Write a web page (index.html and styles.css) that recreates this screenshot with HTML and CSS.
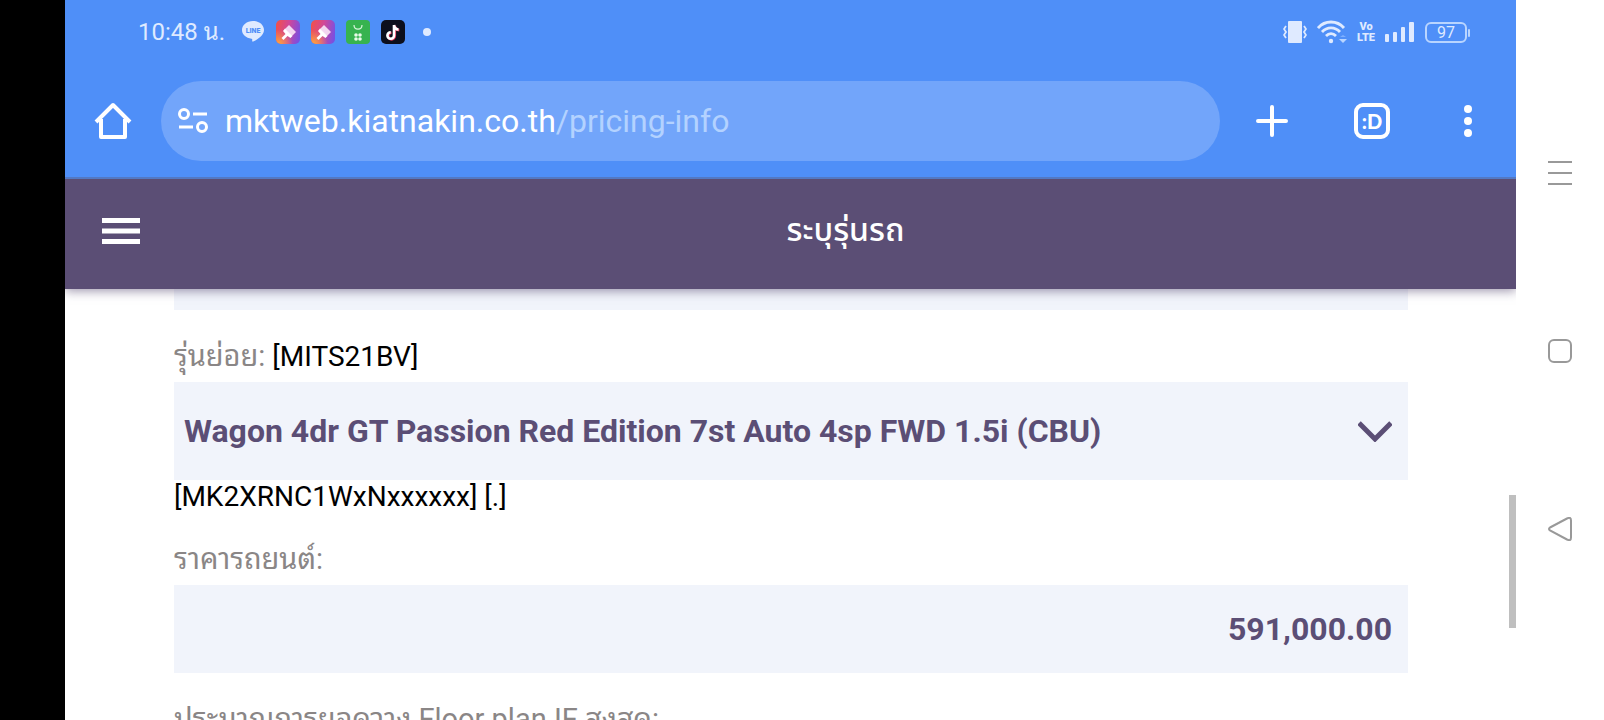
FILE: index.html
```html
<!DOCTYPE html>
<html lang="th">
<head>
  <meta charset="UTF-8">
  <meta name="viewport" content="width=device-width, initial-scale=1.0">
  <title>ระบุรุ่นรถ</title>
  <link rel="stylesheet" href="styles.css">
</head>
<body>

  <div class="screen">
    <header class="browser">
      <div class="statusBar">
        <span class="clock">10:48 น.</span>
        <div class="notifications">
          <svg width="24" height="24" viewBox="0 0 24 24">
            <path d="M12 1C5.700 1 1 5 1 10c0 4.500 4 8 9.500 8.800.9.200.8.700.7 1.500-.2 1.300.2 1.800 1.600 1C16 19.500 23 15.500 23 10c0-5-4.700-9-11-9z" fill="#dfeaff"/>
            <text x="12" y="13" class="lineText">LINE</text>
          </svg>
          <svg width="24" height="24" viewBox="0 0 24 24">
            <defs>
              <linearGradient id="brush" x1="0" y1="0.300" x2="1" y2="0.500">
                <stop offset="0" stop-color="#f0504e"/>
                <stop offset="0.500" stop-color="#d0479a"/>
                <stop offset="1" stop-color="#7a4fe0"/>
              </linearGradient>
              <radialGradient id="glow" cx="0.100" cy="1" r="0.600">
                <stop offset="0" stop-color="#ffa63c"/>
                <stop offset="1" stop-color="#ffa63c" stop-opacity="0"/>
              </radialGradient>
            </defs>
            <rect width="24" height="24" rx="5" fill="url(#brush)"/>
            <rect width="24" height="24" rx="5" fill="url(#glow)"/>
            <path d="M13 5l7 7-4 4-7-7z" fill="#f3d5f0"/>
            <path d="M9 8.500l7.500 7.500-2 2-3-2-4 4-2-2 4-4-2.500-3z" fill="#fff"/>
          </svg>
          <svg width="24" height="24" viewBox="0 0 24 24">
            <rect width="24" height="24" rx="5" fill="url(#brush)"/>
            <rect width="24" height="24" rx="5" fill="url(#glow)"/>
            <path d="M13 5l7 7-4 4-7-7z" fill="#f3d5f0"/>
            <path d="M9 8.500l7.500 7.500-2 2-3-2-4 4-2-2 4-4-2.500-3z" fill="#fff"/>
          </svg>
          <svg width="24" height="24" viewBox="0 0 24 24">
            <rect width="24" height="24" rx="4" fill="#37b34f"/>
            <path d="M8 5c0 5.500 8 5.500 8 0" fill="none" stroke="#d8f5dc" stroke-width="1.200"/>
            <g fill="#e8fbe9">
              <circle cx="10" cy="15" r="1.800"/><circle cx="14" cy="15" r="1.800"/>
              <circle cx="10" cy="19" r="1.800"/><circle cx="14" cy="19" r="1.800"/>
            </g>
          </svg>
          <svg width="24" height="24" viewBox="0 0 24 24">
            <rect width="24" height="24" rx="5" fill="#0c0f1c"/>
            <path d="M13 5v10.500a3.300 3.300 0 1 1-3.300-3.300M13 5c.3 2.700 2 4.300 4.500 4.500" fill="none" stroke="#e8385a" stroke-width="2.600" transform="translate(0.800 0.600)"/>
            <path d="M13 5v10.500a3.300 3.300 0 1 1-3.300-3.300M13 5c.3 2.700 2 4.300 4.500 4.500" fill="none" stroke="#fff" stroke-width="2.600"/>
          </svg>
          <span class="moreDot"></span>
        </div>
        <div class="indicators">
          <svg width="24" height="24" viewBox="0 0 24 24" fill="#dfeaff">
            <rect x="5" y="1" width="14" height="22" rx="1"/>
            <path d="M3 6L1 9l2 3-2 3 2 3M21 6l2 3-2 3 2 3-2 3" fill="none" stroke="#dfeaff" stroke-width="1.800"/>
          </svg>
          <svg width="30" height="24" viewBox="0 0 30 24">
            <g fill="none" stroke="#dfeaff" stroke-width="2.800">
              <path d="M1 8c7-8 19-8 26 0"/>
              <path d="M5 12c5-5.500 13-5.500 18 0"/>
              <path d="M9 16c3-3 7-3 10 0"/>
            </g>
            <circle cx="14" cy="21" r="2.200" fill="#dfeaff"/>
            <path d="M23 17l3-2 3 2z" fill="#7fb0ff"/>
            <path d="M22 19h8l-4 4z" fill="#b9d5ff"/>
          </svg>
          <span class="volte">Vo<br>LTE</span>
          <svg width="30" height="22" viewBox="0 0 30 22" fill="#dfeaff">
            <rect x="0" y="13" width="4" height="8" rx="1"/>
            <rect x="8" y="11" width="4" height="10" rx="1"/>
            <rect x="16" y="6" width="4" height="15" rx="1"/>
            <rect x="24" y="1" width="5" height="20" rx="1"/>
          </svg>
          <span class="battery">97</span>
        </div>
      </div>

      <div class="toolBar">
        <button type="button" class="iconButton" aria-label="Home">
          <svg width="38" height="38" viewBox="0 0 38 38" fill="none" stroke="#fff" stroke-width="4" stroke-linejoin="round">
            <path d="M2 20L19 3l17 17"/>
            <path d="M7 17v18h24V17"/>
          </svg>
        </button>
        <button type="button" class="address">
          <svg width="30" height="26" viewBox="0 0 30 26" fill="none" stroke="#fff" stroke-width="3">
            <circle cx="6" cy="6" r="4.500"/>
            <path d="M15 6h14M1 19h14"/>
            <circle cx="24" cy="19" r="4.500"/>
          </svg>
          <span class="url">mktweb.kiatnakin.co.th<span class="path">/pricing-info</span></span>
        </button>
        <button type="button" class="iconButton" aria-label="New tab">
          <svg width="32" height="32" viewBox="0 0 32 32" stroke="#fff" stroke-width="4" stroke-linecap="round">
            <path d="M16 2v28M2 16h28"/>
          </svg>
        </button>
        <button type="button" class="iconButton tabs" aria-label="Tabs">:D</button>
        <button type="button" class="iconButton" aria-label="Menu">
          <svg width="8" height="32" viewBox="0 0 8 32" fill="#fff">
            <circle cx="4" cy="4" r="4"/><circle cx="4" cy="16" r="4"/><circle cx="4" cy="28" r="4"/>
          </svg>
        </button>
      </div>
    </header>

    <div class="appBar">
      <button type="button" class="menuButton" aria-label="เมนู">
        <svg width="38" height="26" viewBox="0 0 38 26" fill="#fff">
          <rect y="0" width="38" height="5"/><rect y="10.500" width="38" height="5"/><rect y="21" width="38" height="5"/>
        </svg>
      </button>
      <h1>ระบุรุ่นรถ</h1>
    </div>

    <main class="content">
      <form>
        <div class="previousField"></div>

        <div class="labelRow">
          <label for="subModel">รุ่นย่อย:</label> <span class="code">[MITS21BV]</span>
        </div>
        <div class="selectBox">
          <select id="subModel">
            <option>Wagon 4dr GT Passion Red Edition 7st Auto 4sp FWD 1.5i (CBU)</option>
          </select>
          <svg width="34" height="22" viewBox="0 0 34 22" fill="none" stroke="#5b4e75" stroke-width="5">
            <path d="M1 3l16 16L33 3"/>
          </svg>
        </div>
        <p class="chassis">[MK2XRNC1WxNxxxxxx] [.]</p>

        <div class="labelRow">
          <label for="price">ราคารถยนต์:</label>
        </div>
        <input type="text" id="price" class="price" value="591,000.00" readonly>

        <div class="labelRow">
          <label>ประมาณการยอดวาง Floor plan IF สูงสุด:</label>
        </div>
      </form>
      <div class="scrollThumb"></div>
    </main>
  </div>

  <nav class="systemNav">
    <button type="button" aria-label="Recent apps">
      <svg width="24" height="26" viewBox="0 0 24 26" stroke="#999" stroke-width="2">
        <path d="M0 2h24M0 13h24M0 24h24"/>
      </svg>
    </button>
    <button type="button" aria-label="Home screen">
      <svg width="24" height="24" viewBox="0 0 24 24" fill="none" stroke="#999" stroke-width="2">
        <rect x="1" y="1" width="22" height="22" rx="5"/>
      </svg>
    </button>
    <button type="button" aria-label="Back">
      <svg width="24" height="24" viewBox="0 0 24 24" fill="none" stroke="#999" stroke-width="2">
        <path d="M2 10.500L19 1.500q4-2 4 2v17q0 4-4 2L2 13.500q-2-1.500 0-3z"/>
      </svg>
    </button>
  </nav>

</body>
</html>
```
FILE: styles.css
```css
* {
  box-sizing: border-box;
}

body {
  margin: 0;
  height: 100vh;
  display: flex;
  overflow: hidden;
  background-color: #fff;
  font-family: Roboto, "Noto Sans Thai Looped", "Noto Sans Thai", "Noto Sans", sans-serif;
  font-size: 28px;
  line-height: 32px;
  border-left: 65px solid #000;
}

button {
  display: flex;
  align-items: center;
  justify-content: center;
  padding: 0;
  border: none;
  background: none;
  color: inherit;
  font-family: inherit;
  cursor: pointer;
}

svg {
  display: block;
  flex: none;
}

.screen {
  flex: 1;
  min-width: 0;
  display: flex;
  flex-direction: column;
}

.browser {
  flex: none;
  background-color: #4f8ff8;
  border-bottom: 2px solid #5379c4;
  color: #fff;
}

/* status bar */
.statusBar {
  display: flex;
  align-items: center;
  height: 64px;
  padding: 0 46px 0 73px;
  color: #dfeaff;
}

.clock {
  font-size: 24px;
}

.notifications {
  display: flex;
  align-items: center;
  gap: 11px;
  margin-left: 16px;
}

.lineText {
  font-family: Roboto, sans-serif;
  font-size: 7px;
  font-weight: 900;
  text-anchor: middle;
  fill: #4f8ff8;
}

.moreDot {
  width: 8px;
  height: 8px;
  margin-left: 7px;
  border-radius: 50%;
  background-color: #dfeaff;
}

.indicators {
  display: flex;
  align-items: center;
  gap: 10px;
  margin-left: auto;
}

.volte {
  font-size: 11px;
  font-weight: 900;
  line-height: 11px;
  text-align: center;
}

.battery {
  position: relative;
  width: 42px;
  height: 21px;
  margin-right: 3px;
  border: 2px solid #b9d5ff;
  border-radius: 6px;
  font-size: 16px;
  line-height: 17px;
  text-align: center;
}

.battery::after {
  content: "";
  position: absolute;
  right: -5px;
  top: 5px;
  width: 2px;
  height: 8px;
  border-radius: 1px;
  background-color: #b9d5ff;
}

/* address bar */
.toolBar {
  display: flex;
  align-items: center;
  height: 113px;
  padding: 0 21px;
}

.iconButton {
  width: 54px;
  height: 54px;
  flex: none;
}

.address {
  flex: 1;
  justify-content: flex-start;
  gap: 17px;
  height: 80px;
  margin: 0 25px 0 21px;
  padding: 0 17px;
  border-radius: 40px;
  background-color: #72a5fa;
}

.url {
  font-size: 32px;
  line-height: 40px;
}

.path {
  color: #b3d2ff;
}

.tabs {
  width: 36px;
  height: 36px;
  margin: 0 51px 0 55px;
  border: 4px solid #fff;
  border-radius: 9px;
  font-family: Lato, sans-serif;
  font-size: 20px;
  font-weight: 900;
}

/* app bar */
.appBar {
  position: relative;
  z-index: 1;
  flex: none;
  display: flex;
  align-items: center;
  height: 110px;
  padding: 0 37px 6px;
  background-color: #5b4e75;
  box-shadow: 0 2px 10px rgba(91, 78, 117, 0.6);
  clip-path: inset(0 0 -16px 0);
  color: #fff;
}

.menuButton {
  height: 48px;
}

.appBar h1 {
  flex: 1;
  margin: 0 0 0 72px;
  font-family: "Noto Sans Thai", "Noto Sans", sans-serif;
  font-size: 32px;
  font-weight: 500;
  line-height: 48px;
  text-align: center;
}

/* form */
.content {
  position: relative;
  flex: 1;
  min-height: 0;
  overflow: hidden;
  padding: 0 108px 0 109px;
}

.previousField {
  height: 21px;
  background-color: #f1f4fb;
}

.labelRow {
  padding: 30px 0 9px;
  color: #8a8686;
}

.labelRow label {
  font-size: 29px;
}

.code {
  color: #000;
}

.selectBox {
  display: grid;
  align-items: center;
  height: 98px;
  background-color: #f1f4fb;
}

.selectBox select,
.selectBox svg {
  grid-area: 1 / 1;
}

.selectBox svg {
  justify-self: end;
  margin-right: 16px;
  pointer-events: none;
}

.selectBox select {
  width: 100%;
  height: 100%;
  padding: 0 60px 0 10px;
  border: none;
  background: none;
  appearance: none;
}

.selectBox select,
.price {
  color: #5b4e75;
  font-family: inherit;
  font-size: 32px;
  font-weight: 700;
}

.chassis {
  margin: 0;
  color: #000;
  line-height: 33px;
}

.price {
  display: block;
  width: 100%;
  height: 88px;
  padding: 0 16px;
  border: none;
  background-color: #f1f4fb;
  text-align: right;
}

.scrollThumb {
  position: absolute;
  right: 0;
  top: 206px;
  width: 7px;
  height: 133px;
  background-color: #bfbfbf;
}

/* phone navigation keys */
.systemNav {
  flex: none;
  display: flex;
  flex-direction: column;
  align-items: center;
  justify-content: center;
  gap: 130px;
  width: 88px;
  padding-bottom: 18px;
}

.systemNav button {
  width: 48px;
  height: 48px;
}
```
